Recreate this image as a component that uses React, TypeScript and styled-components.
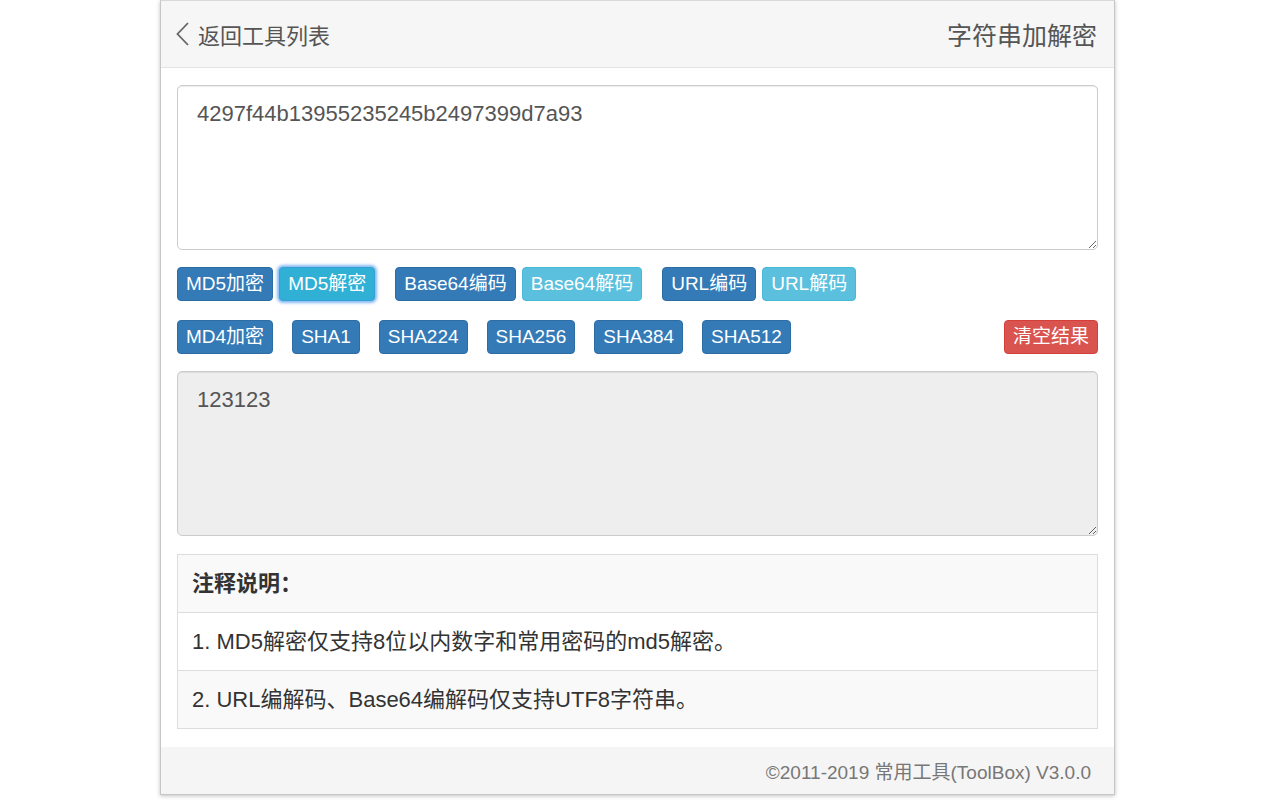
import React from 'react'
import styled, { createGlobalStyle, css } from 'styled-components'

const GlobalStyle = createGlobalStyle`
  html, body {
    margin: 0;
    padding: 0;
    background: #ffffff;
    font-family: "Liberation Sans", "Noto Sans CJK SC", sans-serif;
  }
  * { box-sizing: border-box; }
`

const Page = styled.div`
  padding-left: 160px;
  height: 800px;
`

const Window = styled.div`
  width: 955px;
  height: 795px;
  border: 1px solid #c6c6c6;
  border-top-color: #d8d8d8;
  box-shadow: 0 1px 4px rgba(0, 0, 0, 0.25);
  display: flex;
  flex-direction: column;
  background: #fff;
`

const Header = styled.div`
  height: 67px;
  flex-shrink: 0;
  background: #f6f6f6;
  border-bottom: 1px solid #e3e3e3;
  display: flex;
  align-items: center;
  justify-content: space-between;
  padding: 0 17px 0 14px;
  color: #555;
`

const BackLink = styled.a`
  display: flex;
  align-items: center;
  gap: 8px;
  font-size: 22px;
  color: #555;
  text-decoration: none;
  cursor: pointer;
`

const Title = styled.h1`
  margin: 0;
  font-size: 25px;
  font-weight: normal;
  color: #555;
`

const Content = styled.div`
  flex: 1;
  padding: 17px 16px 17px;
  display: flex;
  flex-direction: column;
`

const TextBox = styled.textarea<{ $readonly?: boolean }>`
  display: block;
  width: 100%;
  height: 165px;
  flex-shrink: 0;
  padding: 12px 19px;
  border: 1px solid #ccc;
  border-radius: 5px;
  font-family: "Liberation Sans", "Noto Sans CJK SC", sans-serif;
  font-size: 22px;
  line-height: 31px;
  color: #555;
  background: ${p => (p.$readonly ? '#eeeeee' : '#fff')};
  box-shadow: inset 0 1px 1px rgba(0, 0, 0, 0.075);
  outline: none;
  resize: vertical;
`

const ButtonRow = styled.div<{ $top: number; $bottom: number; $gap: number }>`
  display: flex;
  align-items: center;
  gap: ${p => p.$gap}px;
  margin-top: ${p => p.$top}px;
  margin-bottom: ${p => p.$bottom}px;
`

const Group = styled.div`
  display: flex;
  gap: 6px;
`

type Variant = 'primary' | 'info' | 'focus' | 'danger'

const variants: Record<Variant, ReturnType<typeof css>> = {
  primary: css`
    background: #337ab7;
    border-color: #2e6da4;
  `,
  info: css`
    background: #5bc0de;
    border-color: #46b8da;
  `,
  focus: css`
    background: #31b0d5;
    border-color: #3a9fd6;
    box-shadow: 0 0 3px 2px rgba(90, 160, 240, 0.75);
  `,
  danger: css`
    background: #d9534f;
    border-color: #d43f3a;
  `,
}

const Button = styled.button<{ $variant: Variant }>`
  height: 34px;
  padding: 0 8px;
  border: 1px solid;
  border-radius: 4px;
  font-family: "Liberation Sans", "Noto Sans CJK SC", sans-serif;
  font-size: 19px;
  line-height: 32px;
  color: #fff;
  cursor: pointer;
  white-space: nowrap;
  ${p => variants[p.$variant]}
`

const Spacer = styled.div`
  flex: 1;
`

const NoteTable = styled.table`
  width: 100%;
  margin-top: 0;
  border-collapse: collapse;
  font-size: 22px;
  color: #333;
`

const Cell = styled.td<{ $striped?: boolean; $bold?: boolean }>`
  border: 1px solid #ddd;
  padding: 13px 14px;
  line-height: 31px;
  background: ${p => (p.$striped ? '#f9f9f9' : '#fff')};
  font-weight: ${p => (p.$bold ? 'bold' : 'normal')};
`

const Footer = styled.div`
  height: 47px;
  flex-shrink: 0;
  background: #f5f5f5;
  display: flex;
  align-items: center;
  justify-content: flex-end;
  padding-right: 23px;
  font-size: 19px;
  color: #777;
`

const Gap = styled.div<{ $h: number }>`
  height: ${p => p.$h}px;
  flex-shrink: 0;
`

const ChevronLeft = () => (
  <svg width="15" height="26" viewBox="0 0 15 26" fill="none">
    <polyline points="13,2 2.5,13 13,24" stroke="#666" strokeWidth="1.8" />
  </svg>
)

const row1: { label: string; variant: Variant }[][] = [
  [
    { label: 'MD5加密', variant: 'primary' },
    { label: 'MD5解密', variant: 'focus' },
  ],
  [
    { label: 'Base64编码', variant: 'primary' },
    { label: 'Base64解码', variant: 'info' },
  ],
  [
    { label: 'URL编码', variant: 'primary' },
    { label: 'URL解码', variant: 'info' },
  ],
]

const row2 = ['MD4加密', 'SHA1', 'SHA224', 'SHA256', 'SHA384', 'SHA512']

const notes = [
  '1. MD5解密仅支持8位以内数字和常用密码的md5解密。',
  '2. URL编解码、Base64编解码仅支持UTF8字符串。',
]

const App = () => {
  return (
    <Page>
      <GlobalStyle />
      <Window>
        <Header>
          <BackLink>
            <ChevronLeft />
            返回工具列表
          </BackLink>
          <Title>字符串加解密</Title>
        </Header>
        <Content>
          <TextBox defaultValue="4297f44b13955235245b2497399d7a93" />
          <ButtonRow $top={17} $bottom={0} $gap={20}>
            {row1.map((g, i) => (
              <Group key={i}>
                {g.map(b => (
                  <Button key={b.label} $variant={b.variant}>{b.label}</Button>
                ))}
              </Group>
            ))}
          </ButtonRow>
          <ButtonRow $top={19} $bottom={17} $gap={19}>
            {row2.map(l => (
              <Button key={l} $variant="primary">{l}</Button>
            ))}
            <Spacer />
            <Button $variant="danger">清空结果</Button>
          </ButtonRow>
          <TextBox $readonly readOnly defaultValue="123123" />
          <Gap $h={18} />
          <NoteTable>
            <tbody>
              <tr>
                <Cell $striped $bold>注释说明：</Cell>
              </tr>
              {notes.map((n, i) => (
                <tr key={n}>
                  <Cell $striped={i % 2 === 1}>{n}</Cell>
                </tr>
              ))}
            </tbody>
          </NoteTable>
        </Content>
        <Footer>©2011-2019 常用工具(ToolBox) V3.0.0</Footer>
      </Window>
    </Page>
  )
}

export default App
